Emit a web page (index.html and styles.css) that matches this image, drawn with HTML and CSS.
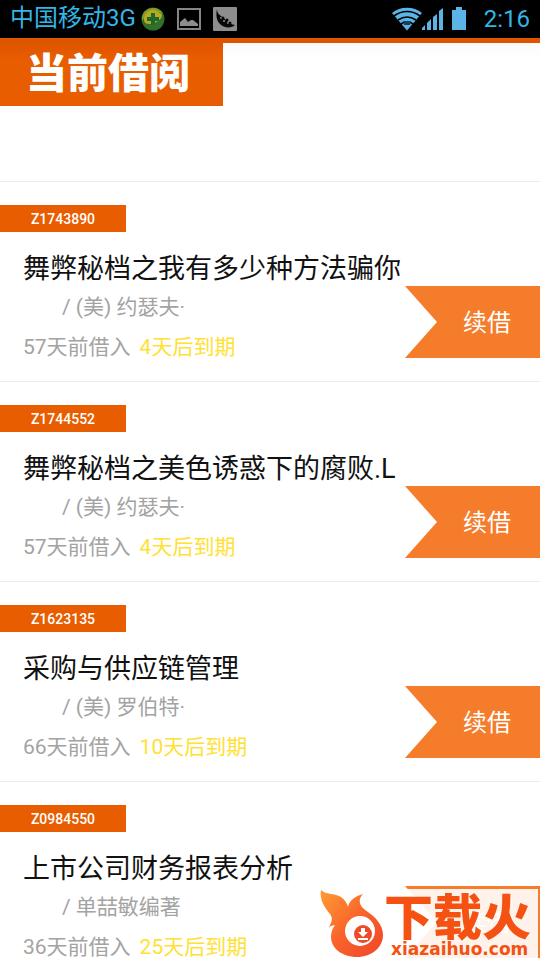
FILE: index.html
```html
<!DOCTYPE html>
<html lang="zh-CN">
<head>
<meta charset="utf-8">
<meta name="viewport" content="width=device-width, initial-scale=1">
<title>当前借阅</title>
<link rel="stylesheet" href="styles.css">
</head>
<body>
<div class="statusbar">
  <span class="carrier">中国移动3G</span>
  <svg class="notice" width="24" height="24" viewBox="0 0 24 24" aria-hidden="true">
    <circle cx="12" cy="12" r="11.500" fill="#25722b"/>
    <path d="M1 14C0 6 6 0 14 1c4 1 7 3 8 6-8-4-16-1-21 7z" fill="#849e25"/>
    <circle cx="12" cy="12" r="9" fill="#b9a91f"/>
    <path d="M1 14c5 5 16 4 21-6 3 8-2 15-10 15-6 0-10-4-11-9z" fill="#2f7129"/>
    <path d="M3 13c2-7 9-10 18-6 0 7-11 12-18 6z" fill="#b5aa24"/>
    <path d="M10 6h4v4h4v4h-4v4h-4v-4H6v-4h4z" fill="#21662b"/>
  </svg>
  <svg class="notice" width="24" height="24" viewBox="0 0 24 24" aria-hidden="true">
    <path d="M1 2h22v20H1z" fill="none" stroke="#858585" stroke-width="2"/>
    <path d="M3 19v-4l5-4 3 4 3-2 2 0 5 4v2z" fill="#8d8d8d"/>
  </svg>
  <svg class="notice" width="24" height="24" viewBox="0 0 24 24" aria-hidden="true">
    <rect width="24" height="24" rx="1" fill="#8d8d8d"/>
    <path d="M4 2c0 3 1 5 4 7 6 4 7 8 14 9-2 2-6 3-10 2C5 18 2 11 4 2z" fill="#080808"/>
    <g fill="#8d8d8d"><circle cx="8" cy="11" r="1"/><circle cx="11" cy="14" r="1"/><circle cx="15" cy="16" r="1"/></g>
    <g fill="#080808"><circle cx="10" cy="11" r="1.500"/><circle cx="14" cy="13" r="1.500"/><circle cx="17" cy="16" r="1.500"/></g>
  </svg>
  <div class="system">
    <svg width="31" height="24" viewBox="0 0 31 24" aria-hidden="true">
      <path d="M16 23.500L1 6C9-1 23-1 31 6z" fill="#5cb3e5"/>
      <path d="M3 9c8-6 18-6 26 0M7 13c6-4 12-4 18 0M10 17c4-3 8-3 12 0" fill="none" stroke="#000" stroke-width="1.600"/>
      <path d="M12 14h8l-1 4h-6z" fill="#174258"/>
    </svg>
    <svg width="22" height="24" viewBox="0 0 22 24" aria-hidden="true">
      <path d="M0 23v-2l3-3v5zM5 23v-7l4-4v11zM11 23V10l4-3v16zM17 23V4l4-3v22z" fill="#5cb3e5"/>
    </svg>
    <svg class="battery" width="14" height="24" viewBox="0 0 14 24" aria-hidden="true">
      <path d="M4 0h6v3h4v20H0V3h4z" fill="#5cb3e5"/>
    </svg>
    <time>2:16</time>
  </div>
</div>
<header class="header"><h1>当前借阅</h1></header>
<main class="loans">
  <article class="loan">
    <span class="code">Z1743890</span>
    <h2>舞弊秘档之我有多少种方法骗你</h2>
    <p class="author">/ (美) 约瑟夫·</p>
    <p class="dates">57天前借入<span class="due">4天后到期</span></p>
    <button class="renew" type="button">续借</button>
  </article>
  <article class="loan">
    <span class="code">Z1744552</span>
    <h2>舞弊秘档之美色诱惑下的腐败.L</h2>
    <p class="author">/ (美) 约瑟夫·</p>
    <p class="dates">57天前借入<span class="due">4天后到期</span></p>
    <button class="renew" type="button">续借</button>
  </article>
  <article class="loan">
    <span class="code">Z1623135</span>
    <h2>采购与供应链管理</h2>
    <p class="author">/ (美) 罗伯特·</p>
    <p class="dates">66天前借入<span class="due">10天后到期</span></p>
    <button class="renew" type="button">续借</button>
  </article>
  <article class="loan">
    <span class="code">Z0984550</span>
    <h2>上市公司财务报表分析</h2>
    <p class="author">/ 单喆敏编著</p>
    <p class="dates">36天前借入<span class="due">25天后到期</span></p>
    <button class="renew" type="button">续借</button>
  </article>
</main>
<aside class="watermark">
  <svg width="64" height="70" viewBox="0 0 64 70" aria-hidden="true">
    <defs><linearGradient id="flame" x1="0" y1="0" x2="1" y2="1"><stop offset="0" stop-color="#ff9d32"/><stop offset=".5" stop-color="#f9642b"/><stop offset="1" stop-color="#ef4529"/></linearGradient></defs>
    <path d="M1 1c5 5 14 3 20 7 4 3 6 6 7 10 1-6 7-11 15-13-5 5-4 11 1 15 5 4 9 6 13 11 4 5 6 10 6 15 0 12-11 22-26 22-15 0-26-9-26-20 0-4 1-8 4-12-2 0-4 1-6 2 3-5 4-9 1-13C6 20-1 12 1 1z" fill="url(#flame)"/>
    <circle cx="40" cy="42" r="15" fill="#fff"/>
    <circle cx="43" cy="45" r="9" fill="#ef4a28"/>
    <path d="M41 39h4v4h3l-5 5-5-5h3zM38 49h10v2H38z" fill="#fff"/>
  </svg>
  <div class="brand">
    <strong>下载火</strong>
    <span class="site">xiazaihuo.com</span>
  </div>
</aside>
</body>
</html>
```
FILE: styles.css
```css
* { box-sizing: border-box; }

body {
  position: relative;
  display: flex;
  flex-direction: column;
  height: 100vh;
  margin: 0;
  overflow: hidden;
  background: #fff;
  font-family: Roboto, "Noto Sans CJK SC", sans-serif;
}

h1, h2, p { margin: 0; font-weight: 400; }

svg { display: block; flex: none; }

.statusbar {
  display: flex;
  align-items: center;
  flex: none;
  height: 38px;
  padding: 0 10px;
  background: #000;
  color: #33b5e5;
  font-size: 24px;
  line-height: 38px;
}

.carrier { margin-right: 5px; line-height: 36px; align-self: flex-start; }
.notice { margin-right: 12px; }

.system {
  display: flex;
  align-items: center;
  margin-left: auto;
}

.battery { margin: 0 18px 0 8px; }

.header {
  flex: none;
  height: 143px;
  border-top: 5px solid #de5500;
  background: linear-gradient(#fafafa, #fff 16px);
}

.header h1 {
  width: fit-content;
  padding: 0 33px 0 26px;
  background: linear-gradient(#de5500, #e85d00 16px);
  color: #fff;
  font-size: 41px;
  font-weight: 900;
  line-height: 63px;
}

.loans { flex: 1; min-height: 0; overflow: hidden; }

.loan {
  position: relative;
  height: 200px;
  padding-top: 23px;
  border-top: 1px solid #ebebeb;
}

.code {
  display: block;
  width: 126px;
  padding-top: 1px;
  background: #e85d00;
  color: #fff;
  font-size: 14px;
  font-weight: 500;
  line-height: 26px;
  text-align: center;
}

.loan h2 {
  padding-left: 23px;
  margin-top: 16px;
  color: #111;
  font-size: 27px;
  line-height: 42px;
}

.author, .dates {
  padding-left: 23px;
  color: #a3a3a3;
  font-size: 21px;
  line-height: 40px;
}

.author { padding-left: 62px; margin-top: -3px; }

.due { margin-left: 9px; color: #ffe135; }

.renew {
  position: absolute;
  top: 104px;
  right: 0;
  width: 135px;
  height: 72px;
  padding: 0 0 3px 29px;
  border: 0;
  background: #f57c2b;
  clip-path: polygon(0 0, 100% 0, 100% 100%, 0 100%, 32px 50%);
  color: #fff;
  font-family: inherit;
  font-size: 24px;
}

.watermark {
  position: absolute;
  right: 2px;
  bottom: 1px;
  display: flex;
  height: 70px;
  background: rgba(255, 255, 255, 0.9);
  color: #f45112;
}

.brand { width: 154px; }

.brand strong {
  display: block;
  margin-top: 8px;
  font-size: 49px;
  font-weight: 900;
  line-height: 44px;
}

.site {
  display: block;
  padding-left: 7px;
  font-family: "DejaVu Sans", sans-serif;
  font-size: 17px;
  font-weight: 700;
  line-height: 16px;
}
```
